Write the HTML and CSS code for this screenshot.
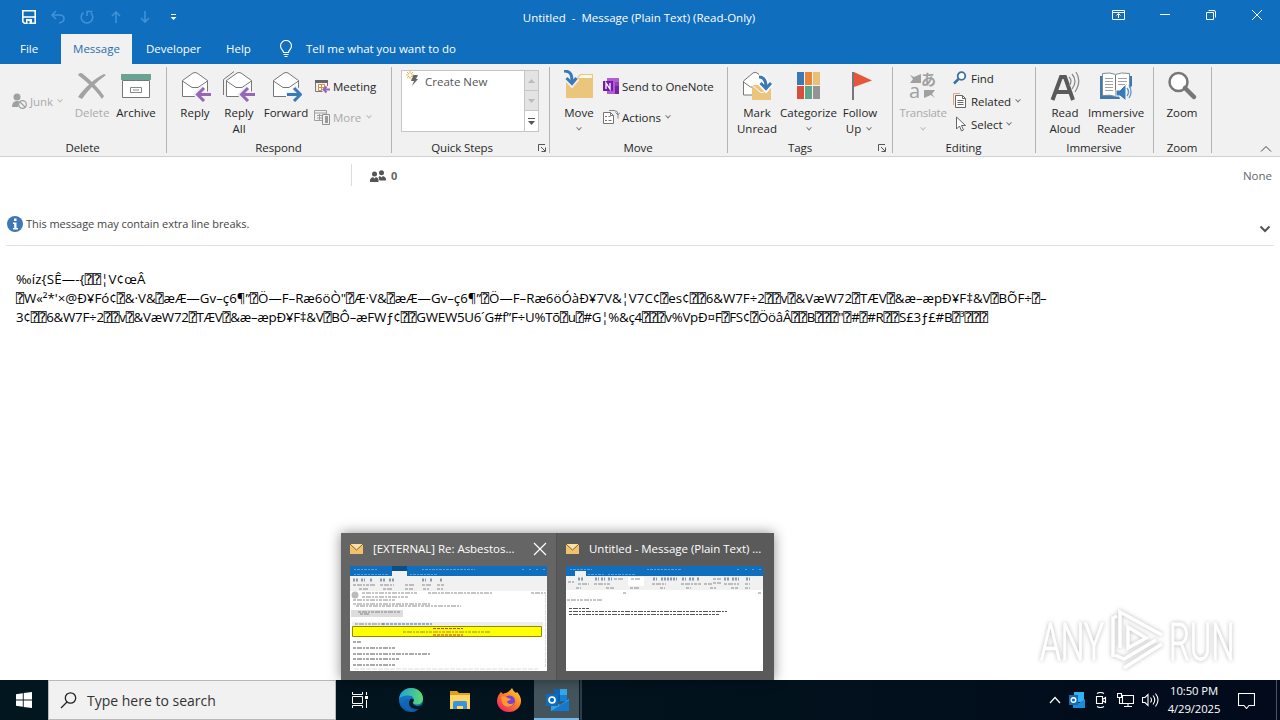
FILE: index.html
```html
<!DOCTYPE html>
<html lang="en">
<head>
    <meta charset="UTF-8">
    <meta name="viewport" content="width=device-width, initial-scale=1.0">
    <title>Untitled - Message (Plain Text)</title>
    <link rel="stylesheet" href="styles.css">
</head>
<body>
    <!-- Title bar -->
    <header class="titlebar">
        <div class="quick-access">
            <svg width="16" height="16" viewBox="0 0 16 16"><path d="M1.8 1.8h12.4v12.4H3.4L1.8 12.6z" fill="none" stroke="#fff" stroke-width="1.6"/><path d="M2 8h12" stroke="#fff" stroke-width="1.6"/><path d="M5 14v-4h6v4" fill="#fff"/><path d="M6.500 12h2v2.500h-2z" fill="#106ebe"/></svg>
            <svg class="dim" width="16" height="16" viewBox="0 0 16 16"><path d="M6 2L2 6l4 4M2.500 6H9.500c3 0 4.500 1.500 4.500 3.800S12 13.500 9 14"/></svg>
            <svg class="dim" width="16" height="16" viewBox="0 0 16 16"><path d="M4.500 3.500A5.800 5.800 0 1 0 11.800 3.800M8 7V2.500h5.500"/></svg>
            <svg class="dim" width="16" height="16" viewBox="0 0 16 16"><path d="M8 14V3M4 7l4-4 4 4"/></svg>
            <svg class="dim" width="16" height="16" viewBox="0 0 16 16"><path d="M8 2v11M4 9l4 4 4-4"/></svg>
            <svg width="16" height="16" viewBox="0 0 16 16"><path d="M5 5.500h5" stroke="#fff"/><path d="M4.500 8h6l-3 3z" fill="#fff"/></svg>
        </div>
        <div class="window-title">Untitled&nbsp; - &nbsp;Message (Plain Text) (Read-Only)</div>
        <div class="window-buttons">
            <svg width="46" height="30" viewBox="0 0 46 30"><path d="M16.500 10.500h12v9h-12zM16.500 12.500h12M22.500 18v-4M20.500 15.500l2-2 2 2"/></svg>
            <svg width="46" height="30" viewBox="0 0 46 30"><path d="M18 14.500h10"/></svg>
            <svg width="46" height="30" viewBox="0 0 46 30"><path d="M18.500 12.500h7v7h-7zM20.500 10.500h5.500q1.500 0 1.500 1.500v5.500"/></svg>
            <svg width="46" height="30" viewBox="0 0 46 30"><path d="M18 10l10 10M28 10l-10 10"/></svg>
        </div>
    </header>

    <!-- Tabs -->
    <nav class="tabs">
        <a class="tab tab-file">File</a>
        <a class="tab tab-active">Message</a>
        <a class="tab tab-developer">Developer</a>
        <a class="tab tab-help">Help</a>
        <svg class="bulb" width="14" height="18" viewBox="0 0 14 18"><path d="M4.500 12.500c0-2.500-3-3-3-6.500a5.500 5.500 0 0 1 11 0c0 3.500-3 4-3 6.500zM4.500 14.500h5M5.500 16.500h3" fill="none" stroke="#fff" stroke-width="1.200"/></svg>
        <a class="tab tell-me">Tell me what you want to do</a>
    </nav>

    <!-- Ribbon -->
    <div class="ribbon">
        <section class="group group-delete">
            <div class="group-body">
                <div class="small-col">
                    <div class="small disabled junk">
                        <svg width="17" height="17" viewBox="0 0 17 17"><circle cx="6" cy="4" r="3.500" fill="#a0a0a0"/><path d="M1 14c0-4 2-6 5-6 1 0 2 .3 2.500.7L7 14z" fill="#a0a0a0"/><circle cx="11.500" cy="11.500" r="3.800" fill="#f1f1f1" stroke="#a0a0a0" stroke-width="1.300"/><path d="M9 9l5 5" stroke="#a0a0a0" stroke-width="1.300"/></svg>
                        <span>Junk</span><i class="chev"></i>
                    </div>
                </div>
                <div class="big disabled">
                    <svg width="32" height="32" viewBox="0 0 32 32"><path d="M2 5c1-2 3-3 5-1 9 7 16 15 21 22l-2 3C20 20 11 12 2 5z" fill="#a3a3a3"/><path d="M28 4l2 1C20 12 12 20 6 29l-4-2C9 17 18 9 28 4z" fill="#a3a3a3"/></svg>
                    <span>Delete</span>
                </div>
                <div class="big">
                    <svg width="32" height="32" viewBox="0 0 32 32"><path d="M1 4h30v6H1z" fill="#6aa391"/><path d="M2.500 10.500h27v17h-27z" fill="#fff" stroke="#777"/><path d="M10.500 17.500h11v5h-11z" fill="#fff" stroke="#888"/><path d="M13 20h6" stroke="#888"/></svg>
                    <span>Archive</span>
                </div>
            </div>
            <div class="group-label">Delete</div>
        </section>

        <section class="group group-respond">
            <div class="group-body">
                <div class="big">
                    <svg width="32" height="32" viewBox="0 0 32 32"><path d="M3.500 26.500v-16L14 3q2-1 4 0l10.500 7.500v16z" fill="#fff" stroke="#777"/><path d="M3.500 11L13 17.500h6L28.500 11" fill="none" stroke="#777"/><path d="M32 24.500H19M25 17.500l-7 7 7 7" fill="none" stroke="#f1f1f1" stroke-width="6"/><path d="M32 24.500H19M25 18l-6.500 6.500L25 31" fill="none" stroke="#9467b8" stroke-width="3"/></svg>
                    <span>Reply</span>
                </div>
                <div class="big">
                    <svg width="32" height="32" viewBox="0 0 32 32"><path d="M.5 25V9.500L11 1.500" fill="none" stroke="#777"/><path d="M3.500 26.500v-16L14 3q2-1 4 0l10.500 7.500v16z" fill="#fff" stroke="#777"/><path d="M3.500 11L13 17.500h6L28.500 11" fill="none" stroke="#777"/><path d="M32 24.500H19M25 17.500l-7 7 7 7" fill="none" stroke="#f1f1f1" stroke-width="6"/><path d="M32 24.500H19M25 18l-6.500 6.500L25 31" fill="none" stroke="#9467b8" stroke-width="3"/></svg>
                    <span>Reply<br>All</span>
                </div>
                <div class="big forward">
                    <svg width="32" height="32" viewBox="0 0 32 32"><path d="M3.500 26.500v-16L14 3q2-1 4 0l10.500 7.500v16z" fill="#fff" stroke="#777"/><path d="M3.500 11L13 17.500h6L28.500 11" fill="none" stroke="#777"/><path d="M16 24.500h14M24 17.500l7 7-7 7" fill="none" stroke="#f1f1f1" stroke-width="6"/><path d="M17 24.500h13M24 18l6.500 6.500L24 31" fill="none" stroke="#3a7ab8" stroke-width="3"/></svg>
                    <span>Forward</span>
                </div>
                <div class="small-col two-rows">
                    <div class="small">
                        <svg width="16" height="16" viewBox="0 0 16 16"><path d="M1 2h13v3H1z" fill="#666"/><path d="M1.500 5v8.500h7M13.500 5v3" fill="none" stroke="#777"/><path d="M4.500 6.500h3v3h-3zM7.500 6.500h3v3h-3zM4.500 9.500h3v3h-3z" fill="#fff" stroke="#d98a4c"/><path d="M16 11.500H9.500M12.500 8.500l-3 3 3 3" fill="none" stroke="#9467b8" stroke-width="2"/></svg>
                        <span>Meeting</span>
                    </div>
                    <div class="small disabled">
                        <svg width="16" height="16" viewBox="0 0 16 16"><path d="M.5 1.500h12v10H.5zM.5 4h12M3 6.500h6M3 9h6M5.500 5v6" fill="none" stroke="#a0a0a0"/><path d="M8.500 5.500h7v10h-7z" fill="#f1f1f1" stroke="#909090"/><path d="M11 7h3v7h-3z" fill="#999"/></svg>
                        <span>More</span><i class="chev"></i>
                    </div>
                </div>
            </div>
            <div class="group-label">Respond</div>
        </section>

        <section class="group group-steps">
            <div class="group-body">
                <div class="gallery">
                    <div class="gallery-item">
                        <svg width="14" height="16" viewBox="0 0 14 16"><path d="M7 4h5l-2 4h2l-6 7 2-5H5z" fill="#666"/><path d="M4 0v8M0 4h8M1 1l6 6M7 1L1 7" stroke="#e2b25c"/><circle cx="4" cy="4" r="1.500" fill="#fff"/></svg>
                        <span>Create New</span>
                    </div>
                    <div class="gallery-scroll">
                        <b class="off"><svg width="7" height="4"><path d="M0 4l3.500-4L7 4z" fill="#bbb"/></svg></b>
                        <b class="off"><svg width="7" height="4"><path d="M0 0l3.500 4L7 0z" fill="#bbb"/></svg></b>
                        <b><svg width="7" height="7"><path d="M0 .5h7" stroke="#555"/><path d="M0 3l3.500 4L7 3z" fill="#555"/></svg></b>
                    </div>
                </div>
            </div>
            <div class="group-label has-launcher"><span>Quick Steps</span>
                <svg width="8" height="8" viewBox="0 0 8 8"><path d="M.5 7V.5H7M3 3l4 4M7.500 3.500v4h-4" fill="none" stroke="#555"/></svg>
            </div>
        </section>

        <section class="group group-move">
            <div class="group-body">
                <div class="big">
                    <svg width="32" height="32" viewBox="0 0 32 32"><path d="M3 28V9h10l4-5h13v24z" fill="#ebc57b"/><path d="M15 8l3-3h11v3z" fill="#fff8ec"/><path d="M1 1c7 0 8 4 8 11M3.500 8L9 14l5-6" fill="none" stroke="#f1f1f1" stroke-width="6"/><path d="M1 1c7 0 8 4 8 11M3.500 8L9 13.500 13.500 8" fill="none" stroke="#3a7ab8" stroke-width="3"/></svg>
                    <span>Move</span><i class="chev"></i>
                </div>
                <div class="small-col two-rows">
                    <div class="small">
                        <svg width="17" height="16" viewBox="0 0 17 16"><path d="M4 0h12v16H4z" fill="#b05fd0"/><path d="M12 4h4v4h-4z" fill="#9440bd"/><path d="M12 8h4v8h-4z" fill="#7227a0"/><path d="M0 3h10v10H0z" fill="#7719aa"/><path d="M3 11V5l4 6V5" fill="none" stroke="#fff" stroke-width="1.300"/></svg>
                        <span>Send to OneNote</span>
                    </div>
                    <div class="small">
                        <svg width="17" height="16" viewBox="0 0 17 16"><path d="M.5 3.500h7l3 3v8H.5z" fill="#fff" stroke="#777"/><path d="M7.500 3.500v3h3M2 7.500h2M5.500 7.500h2M2 11.500h2M5.500 11.500h3" fill="none" stroke="#777"/><path d="M6 1.500h5q4 0 4 4v4M12.500 3.500L15 6l2-2.500" fill="none" stroke="#888"/></svg>
                        <span>Actions</span><i class="chev"></i>
                    </div>
                </div>
            </div>
            <div class="group-label">Move</div>
        </section>

        <section class="group group-tags">
            <div class="group-body">
                <div class="big">
                    <svg width="32" height="32" viewBox="0 0 32 32"><path d="M2.500 25V11L12 3q2-1.500 4 0l8 6v16z" fill="#fff" stroke="#777"/><path d="M2.500 12l7 5h6" fill="none" stroke="#777"/><path d="M11 15h19v15H11z" fill="#ebc57b"/><path d="M11 15l8 7q2 1.500 4 0l7-6" fill="none" stroke="#fff"/><path d="M18 7c6 0 7 5 7 11M19.500 13l5.500 6 5-6" fill="none" stroke="#fff" stroke-width="6"/><path d="M18 7c6 0 7 5 7 10M19.500 13l5.500 5.500 5-5.500" fill="none" stroke="#3a7ab8" stroke-width="3"/></svg>
                    <span>Mark<br>Unread</span>
                </div>
                <div class="big categorize">
                    <svg width="32" height="32" viewBox="0 0 32 32"><path d="M4 2h7v13H4z" fill="#3c78b8"/><path d="M12 2h7v13h-7z" fill="#e8843c"/><path d="M20 2h7v13h-7z" fill="#e8c078"/><path d="M4 16h7v13H4z" fill="#d8503c"/><path d="M12 16h7v13h-7z" fill="#5fa58b"/><path d="M20 16h7v13h-7z" fill="#949494"/></svg>
                    <span>Categorize</span><i class="chev"></i>
                </div>
                <div class="big">
                    <svg width="32" height="32" viewBox="0 0 32 32"><path d="M9 2v28" stroke="#777" stroke-width="2"/><path d="M10 2l18 8.500L10 17z" fill="#e8553c"/></svg>
                    <span>Follow<br>Up <i class="chev"></i></span>
                </div>
            </div>
            <div class="group-label has-launcher"><span>Tags</span>
                <svg width="8" height="8" viewBox="0 0 8 8"><path d="M.5 7V.5H7M3 3l4 4M7.500 3.500v4h-4" fill="none" stroke="#555"/></svg>
            </div>
        </section>

        <section class="group group-editing">
            <div class="group-body">
                <div class="big disabled translate">
                    <svg width="32" height="32" viewBox="0 0 32 32"><path d="M3 5l4 2 7-3v9H3l3-4z" fill="#a0a0a0"/><path d="M28 28l-4-3-7 3v-8h11l-3 4z" fill="#a0a0a0"/><text x="14" y="15" class="glyph-ja">あ</text><text x="2" y="28" class="glyph-a">a</text></svg>
                    <span>Translate</span><i class="chev"></i>
                </div>
                <div class="small-col three-rows">
                    <div class="small">
                        <svg width="16" height="16" viewBox="0 0 16 16"><circle cx="8.500" cy="6" r="3.800" fill="#fff" stroke="#3a6fa8" stroke-width="1.800"/><path d="M5.500 9L1 13.500" stroke="#3a6fa8" stroke-width="2.500"/></svg>
                        <span>Find</span>
                    </div>
                    <div class="small">
                        <svg width="16" height="16" viewBox="0 0 16 16"><path d="M.5 12V.5H7" fill="none" stroke="#e2a470"/><path d="M2.500 2.500h7l3 3v9h-10z" fill="#fff" stroke="#666"/><path d="M9.500 2.500v3h3M4.500 7.500h6M4.500 9.500h6M4.500 11.500h6" fill="none" stroke="#666"/></svg>
                        <span>Related</span><i class="chev"></i>
                    </div>
                    <div class="small">
                        <svg width="16" height="16" viewBox="0 0 16 16"><path d="M3.500 1v12l3-3 2 5 2-1-2-4.500h4z" fill="#fff" stroke="#666"/></svg>
                        <span>Select</span><i class="chev"></i>
                    </div>
                </div>
            </div>
            <div class="group-label">Editing</div>
        </section>

        <section class="group group-immersive">
            <div class="group-body">
                <div class="big">
                    <svg width="32" height="32" viewBox="0 0 32 32"><path d="M3.500 30L12 7h4l8 23M6.500 22h14" fill="none" stroke="#5a5a5a" stroke-width="4"/><path d="M20 7q4 4 0 9M23 4q6 7 0 15M27 2q6 9-1 20" fill="none" stroke="#888" stroke-width="1.200"/></svg>
                    <span>Read<br>Aloud</span>
                </div>
                <div class="big reader">
                    <svg width="32" height="32" viewBox="0 0 32 32"><path d="M0 6h32v23H0z" fill="#3f78b0"/><path d="M2.500 3.500q8-1.500 13 1 5-2.500 14-1v22q-8-1-14 1-5-2-13-1z" fill="#fff" stroke="#7e8a96"/><path d="M15.500 5v21" stroke="#777"/><path d="M5 8.500h8M5 11.500h8M5 14.500h8M5 17.500h8M5 20.500h8M18 8.500h9M18 11.500h9M18 14.500h9" stroke="#a0a0a0"/><path d="M20 29l-1-3 13-10v15z" fill="#f1f1f1"/><path d="M16 20h4l6-6v17l-6-5h-4z" fill="#3a7ab8" stroke="#fff"/><path d="M27 18q3 4 0 8M29 15q4 7 0 13" fill="none" stroke="#5b93c8" stroke-width="1.300"/></svg>
                    <span>Immersive<br>Reader</span>
                </div>
            </div>
            <div class="group-label">Immersive</div>
        </section>

        <section class="group group-zoom">
            <div class="group-body">
                <div class="big">
                    <svg width="32" height="32" viewBox="0 0 32 32"><circle cx="12.500" cy="12" r="9" fill="#fff" stroke="#777" stroke-width="2.500"/><path d="M19 18l9 9" stroke="#777" stroke-width="4.500" stroke-linecap="round"/></svg>
                    <span>Zoom</span>
                </div>
            </div>
            <div class="group-label">Zoom</div>
        </section>
        <svg class="collapse" width="12" height="8" viewBox="0 0 12 8"><path d="M1 6.500l5-5 5 5" fill="none" stroke="#444"/></svg>
    </div>

    <!-- Message -->
    <main class="message">
        <div class="header-row">
            <div class="people">
                <svg width="16" height="13" viewBox="0 0 16 13"><circle cx="4.500" cy="4" r="2.500"/><circle cx="11.500" cy="2.800" r="2.500"/><path d="M0 12V9.500Q1 7.500 3 7l1.500 1.500L6 7q2 .5 2.500 2.500V12zM8.500 7.500Q9 6 10 6l1.500 1.500L13 6q2 .5 3 2.500V10.500H9.500z"/></svg>
                <b>0</b>
            </div>
            <span class="none">None</span>
        </div>
        <div class="info-row">
            <svg width="16" height="16" viewBox="0 0 16 16"><circle cx="8" cy="8" r="8" fill="#3d77b5"/><path d="M7 2.500h2.500V5H7zM6 6.500h3.500V12H11v1.500H6V12h1.200V8H6z" fill="#fff"/></svg>
            <span>This message may contain extra line breaks.</span>
            <svg class="expand" width="12" height="8" viewBox="0 0 12 8"><path d="M1.500 1.500L6 6l4.500-4.500" fill="none" stroke="#555" stroke-width="2"/></svg>
        </div>
        <div class="mail-text">
            <p class="line-1">‰íz{SÊ—-{⍰⍰¦V¢œÂ</p>
            <p class="line-2">⍰W«²*'×@Ð¥Fó¢⍰&amp;·V&amp;⍰æÆ—Gv–ç6¶”⍰Ö—F–Ræ6öÒ"⍰Æ·V&amp;⍰æÆ—Gv–ç6¶”⍰Ö—F–Ræ6öÓàÐ¥7V&amp;¦V7C¢⍰es¢⍰⍰6&amp;W7F÷2⍰⍰v⍰&amp;VæW72⍰TÆV⍰&amp;æ–æpÐ¥F‡&amp;V⍰BÕF÷⍰–</p>
            <p class="line-3">3¢⍰⍰6&amp;W7F÷2⍰⍰v⍰&amp;VæW72⍰TÆV⍰&amp;æ–æpÐ¥F‡&amp;V⍰BÔ–æFWƒ¢⍰⍰GWEW5U6´G#f”F÷U%Tõ⍰u⍰#G¦%&amp;ç4⍰⍰⍰v%VpÐ¤F⍰FS¢⍰ÖöâÂ⍰⍰B⍰⍰⍰"⍰#⍰#R⍰⍰S£3ƒ£#B⍰³⍰⍰⍰</p>
        </div>
    </main>

    <!-- Watermark -->
    <div class="watermark">
        <svg width="210" height="80" viewBox="0 0 210 80">
            <text transform="translate(10 60) scale(.64 1)">ANY</text>
            <text transform="translate(139 60) scale(.63 1)">RUN</text>
            <path d="M83 57V18l4-2M90 48V12l42 23M126 40L94 59l-9-4M132 44L94 68M98 27v21l18-10z"/>
        </svg>
    </div>

    <!-- Window previews -->
    <div class="previews">
        <div class="preview hovered">
            <div class="preview-title">
                <svg width="13" height="10" viewBox="0 0 13 10"><path d="M0 0h13v10H0z" fill="#f0c26e"/><path d="M0 0l6.500 6L13 0" fill="#fbe0a8" stroke="#8a6420"/></svg>
                <span>[EXTERNAL] Re: Asbestos...</span>
                <svg class="close" width="14" height="14" viewBox="0 0 14 14"><path d="M1 1l12 12M13 1L1 13" stroke="#fff" stroke-width="1.200"/></svg>
            </div>
            <svg class="thumb" width="197" height="105" viewBox="0 0 197 105">
                <path d="M0 0h197v10H0z" fill="#106ebe"/><path d="M42 0h15v5H42z" fill="#0b4f8a"/><path d="M42 5h15v5H42z" fill="#f1f1f1"/><path d="M0 10h197v15H0z" fill="#f1f1f1"/>
                <path class="faint-light" d="M4 3.500h24M72 3.500h53M4 8.500h35M60 8.500h28M172 3.500h3M179 3.500h3M186 3.500h3M193 3.500h2"/>
                <path class="ink-blue" d="M3 14h6M11 14h4M20 14h3M30 14h5M39 14h5M72 14h4M80 14h3M90 14h3" stroke-width="3"/>
                <path class="ink" d="M3 19h23M30 19h14M55 19h10M72 19h10M87 19h7M9 23h10M33 23h10M55 23h8M73 23h6M87 23h6" opacity=".6"/>
                <circle cx="5" cy="29" r="3.500" fill="#bbb"/>
                <path class="ink" d="M12 27h56M78 27h64M181 27h15M12 31h46M3 34h42M3 38h78M6 40h105" opacity=".7"/>
                <path d="M1 44h52v7H1z" fill="#ddd"/><path class="ink" d="M8 46h42M10 48h10"/>
                <path d="M2 56h191v5H2z" fill="#eee"/><path class="ink" d="M5 58h30"/><path d="M32 58h50" stroke="#4267c8" stroke-dasharray="3 1"/>
                <path d="M2.500 60.500h189v10h-189z" fill="#ff0" stroke="#8c8c00"/><path d="M83 62.500h30M83 69h30" stroke="#e63232" stroke-dasharray="3 1"/><path class="ink" d="M53 66h88"/>
                <path class="ink dark" d="M3 76h8M3 82h42M3 88h78M3 93h46M3 99h43"/>
                <path d="M4 103h184M195.500 26v75" stroke="#ddd" stroke-dasharray="5 1"/>
            </svg>
        </div>
        <div class="preview">
            <div class="preview-title">
                <svg width="13" height="10" viewBox="0 0 13 10"><path d="M0 0h13v10H0z" fill="#f0c26e"/><path d="M0 0l6.500 6L13 0" fill="#fbe0a8" stroke="#8a6420"/></svg>
                <span>Untitled - Message (Plain Text) ...</span>
            </div>
            <svg class="thumb" width="197" height="105" viewBox="0 0 197 105">
                <path d="M0 0h197v10H0z" fill="#106ebe"/><path d="M9 5h11v5H9z" fill="#f1f1f1"/><path d="M0 10h197v14H0z" fill="#f1f1f1"/>
                <path class="faint-light" d="M4 3.500h22M81 3.500h35M22 8.500h16M42 8.500h28M171 3.500h3M179 3.500h3M186 3.500h3M193 3.500h2"/>
                <path d="M62 11h16v9H62z" fill="#fff"/>
                <path class="ink-blue" d="M12 13h5M29 13h4M35 13h4M42 13h4M87 13h4M95 13h16M116 13h4M123 13h5M131 13h3M158 13h5M166 13h7M180 13h4" stroke-width="3"/>
                <path class="ink" d="M2 16h6M12 18h11M28 18h16M48 13h10M65 13h10M86 18h14M115 18h20M138 18h8M147 13h8M147 17h8M158 18h15M179 18h5M10 22h5M40 22h8M64 22h9M94 22h5M120 22h5M144 22h6M165 22h7M179 22h5" opacity=".7"/>
                <path class="ink" d="M57 27h4M192 27h4M1 34h36" opacity=".85"/>
                <path class="ink dark" d="M3 42.500h20M3 45.500h158M3 48.500h150"/>
            </svg>
        </div>
    </div>

    <!-- Taskbar -->
    <footer class="taskbar">
        <div class="start"><svg width="16" height="16" viewBox="0 0 16 16"><path d="M0 2.200L6.800 1.200v6.300H0zM7.700 1.100L16 0v7.500H7.700zM0 8.400h6.800v6.400L0 13.800zM7.700 8.400H16V16l-8.300-1.100z" fill="#fff"/></svg></div>
        <div class="search">
            <svg width="17" height="17" viewBox="0 0 17 17"><circle cx="10.500" cy="6" r="5.200" fill="none" stroke="#222" stroke-width="1.300"/><path d="M7 10l-6 6" stroke="#222" stroke-width="1.300"/></svg>
            <span>Type here to search</span>
        </div>
        <div class="app task-view"><svg width="16" height="16" viewBox="0 0 16 16"><path d="M.5 0v2.500h10V0M.5 16v-2.500h10V16M.5 4.500h10v7H.5zM14.500 0v3M14.500 8v8" fill="none" stroke="#fff"/><path d="M13 4h3v3h-3z" fill="#fff"/></svg></div>
        <div class="app">
            <svg width="24" height="24" viewBox="0 0 24 24">
                <defs>
                    <linearGradient id="edgeTop" x1="0" x2="1"><stop offset="0" stop-color="#1fa3dd"/><stop offset="1" stop-color="#5ddc6c"/></linearGradient>
                    <linearGradient id="edgeBase" x2="0" y2="1"><stop offset="0" stop-color="#1b86d6"/><stop offset="1" stop-color="#0b55a8"/></linearGradient>
                </defs>
                <circle cx="12" cy="12" r="12" fill="url(#edgeBase)"/>
                <path d="M0 11C1 4 6 0 12 0c7 0 12 5 12 10.500 0 4-3 6-6 6-3 0-4.500-1.300-3.800-2.500C16 11 14 7.500 9.500 7.500 5 7.500 1 9 0 11z" fill="url(#edgeTop)"/>
                <path d="M14 14c-1 2 1.500 4 5 4 1.500 0 3-.5 4-1.300L21 21c-5 1-11-1-11-6 0-3 2-5 4-4 1 1 1 2 0 3z" fill="#021820"/>
                <path d="M10 11c-5 4-1 11 6 12.300C7 25 2 17 7 11z" fill="#1263b4"/>
            </svg>
        </div>
        <div class="app"><svg width="22" height="20" viewBox="0 0 22 20"><path d="M1 1h7l2 2h11v5H1z" fill="#e3a21a"/><path d="M1 5h20v14H1z" fill="#ffd767"/><path d="M4 19v-6q0-2 2-2h10q2 0 2 2v6h-4v-3H8v3z" fill="#3a94d8"/></svg></div>
        <div class="app">
            <svg width="24" height="24" viewBox="0 0 24 24">
                <defs><linearGradient id="fox" x1="1" x2="0.200" y2="1"><stop offset="0" stop-color="#ffe14a"/><stop offset=".45" stop-color="#ff8a1e"/><stop offset="1" stop-color="#f0206a"/></linearGradient></defs>
                <path d="M4 4l2 2q1-1 3-1 3-1 6-5 1 3 4 5l1-1q4 4 4 9c0 6-5 11-12 11S0 19 0 13c0-4 2-7 4-9z" fill="url(#fox)"/>
                <circle cx="12.500" cy="13" r="5.500" fill="#7542d8"/><path d="M4 9c3-1 5 0 7 1l3 1c-1 2-3 1-4 3 1 2 4 3 7 1-2 5-11 5-12-1z" fill="#ff9a2e"/>
            </svg>
        </div>
        <div class="app app-active">
            <svg width="24" height="24" viewBox="0 0 24 24"><path d="M8 1h13v13H8z" fill="#1066b5"/><path d="M14 1h7v6h-7z" fill="#32a9e7"/><path d="M8 7h6v6H8z" fill="#0a5ca8"/><path d="M14 7h7v6h-7z" fill="#167fd0"/><path d="M5 11l9 6 9-6v12H5z" fill="#2fa4e8"/><path d="M5 23l18-11v11z" fill="#1479cc"/><path d="M0 6h12v12H0z" fill="#0f6cbd"/><circle cx="6" cy="12" r="3" fill="none" stroke="#fff" stroke-width="1.700"/></svg>
        </div>
        <div class="stack-edge"></div>
        <div class="tray">
            <svg width="12" height="8" viewBox="0 0 12 8"><path d="M1 7l5-5.500L11 7" fill="none" stroke="#fff" stroke-width="1.200"/></svg>
            <svg width="16" height="16" viewBox="0 0 16 16"><path d="M5 0h10v10H5z" fill="#36b0ee"/><path d="M4 7l6 4 6-4v9H4z" fill="#1b8ad8"/><path d="M0 3h9v10H0z" fill="#0f6cbd"/><circle cx="4.500" cy="8" r="2.300" fill="none" stroke="#fff" stroke-width="1.400"/></svg>
            <svg width="16" height="16" viewBox="0 0 16 16" class="line"><path d="M3.500 4.500h6v7h-6zM9.500 7.500l3-2v5l-3-2M4 1.500q3.500-2 7 0M4 14.500q3.500 2 7 0"/></svg>
            <svg width="17" height="16" viewBox="0 0 17 16" class="line"><path d="M5.500 3.500h11v8h-11zM11 11.500v3M7 14.500h8M.5 1.500h4v4h-4zM2.500 5.500v6h3"/></svg>
            <svg width="17" height="16" viewBox="0 0 17 16" class="line"><path d="M.5 5.500H3l3-3v11l-3-3H.5zM8.500 5.500q2 2.500 0 5M11 3.500q3.500 4.500 0 9M13.500 1.500q5 6.500 0 13"/></svg>
            <div class="clock">10:50 PM<br>4/29/2025</div>
            <svg class="line notify" width="17" height="16" viewBox="0 0 17 16"><path d="M.5.500h16v12H11l-2.500 3-2.500-3H.5z"/></svg>
        </div>
    </footer>
</body>
</html>
```
FILE: styles.css
```css
* {
    box-sizing: border-box;
}
body {
    margin: 0;
    width: 1280px;
    height: 720px;
    position: relative;
    overflow: hidden;
    display: flex;
    flex-direction: column;
    background: #fff;
    font-family: "Open Sans", "Noto Sans", sans-serif;
    font-size: 11.5px;
    color: #262626;
}
svg {
    display: block;
    flex: none;
}
p {
    margin: 0;
}

/* Title bar */
.titlebar {
    height: 34px;
    background: #106ebe;
    color: #fff;
    display: grid;
    grid-template-columns: 426px 1fr 428px;
}
.quick-access {
    display: flex;
    gap: 13px;
    padding: 9px 0 0 21px;
}
.dim {
    fill: none;
    stroke: #3f92d8;
    stroke-width: 1.6;
}
.window-title {
    text-align: center;
    line-height: 36px;
    white-space: nowrap;
}
.window-buttons {
    display: flex;
    justify-content: flex-end;
    fill: none;
    stroke: #fff;
}

/* Tabs */
.tabs {
    height: 30px;
    background: #106ebe;
    color: #fff;
    display: flex;
    font-size: 11.5px;
    line-height: 29px;
}
.tab {
    white-space: nowrap;
}
.tab-file {
    width: 61px;
    padding-left: 20px;
}
.tab-active {
    width: 71px;
    background: #f1f1f1;
    color: #2a6cab;
    text-align: center;
}
.tab-developer {
    width: 94px;
    padding-left: 14px;
}
.tab-help {
    width: 54px;
}
.bulb {
    margin: 6px 12px 0 -1px;
}
.tell-me {
    padding-left: 1px;
    letter-spacing: -.05px;
}

/* Ribbon */
.ribbon {
    height: 93px;
    background: #f1f1f1;
    border-bottom: 1px solid #d0d0d0;
    display: flex;
}
.group {
    display: flex;
    flex-direction: column;
    padding-top: 6px;
    border-right: 1px solid #b4b4b4;
    border-image: linear-gradient(transparent 4px, #b4b4b4 4px, #b4b4b4 88px, transparent 88px) 1;
}
.group-delete { width: 167px; }
.group-respond { width: 225px; }
.group-steps { width: 158px; }
.group-move { width: 178px; }
.group-tags { width: 165px; }
.group-editing { width: 143px; }
.group-immersive { width: 118px; }
.group-zoom { width: 58px; }
.group-body {
    display: flex;
    flex: none;
    height: 69px;
    padding-left: 7px;
}
.group-delete .group-body { padding-left: 11px; }
.group-respond .group-body { padding-left: 6px; }
.group-steps .group-body { padding-left: 9px; }
.group-editing .group-body { padding-left: 6px; }
.group-zoom .group-body { padding-left: 6px; }
.group-label {
    flex: none;
    height: 17px;
    text-align: center;
    line-height: 18px;
    padding-right: 1px;
    letter-spacing: -.1px;
}
.has-launcher {
    display: flex;
    align-items: center;
}
.has-launcher span {
    flex: 1;
    padding-right: 6px;
}
.has-launcher svg {
    margin-right: 2px;
}
.group-tags .group-label {
    padding-right: 4px;
}
.big {
    width: 44px;
    display: flex;
    flex-direction: column;
    align-items: center;
    text-align: center;
    line-height: 16px;
    white-space: nowrap;
}
.big span {
    margin-top: 3px;
}
.big > .chev {
    margin-top: 6px;
}
.forward { width: 50px; }
.categorize { width: 59px; }
.translate { width: 48px; }
.translate span {
    letter-spacing: -.3px;
}
.reader { width: 58px; }
.disabled {
    color: #aaa;
}
.small-col {
    display: flex;
    flex-direction: column;
    padding-left: 3px;
}
.group-delete .small-col {
    width: 59px;
    padding: 22px 0 0;
}
.two-rows {
    padding-top: 7px;
    gap: 13px;
}
.group-respond .small {
    gap: 3px;
}
.group-move .two-rows {
    padding-left: 2px;
}
.three-rows {
    padding-left: 6px;
    gap: 5px;
    margin-top: -1px;
}
.small {
    display: flex;
    align-items: center;
    height: 18px;
    gap: 2px;
    white-space: nowrap;
}
.small span {
    letter-spacing: -.05px;
}
.junk {
    gap: 2px;
}
.chev {
    display: inline-block;
    width: 4px;
    height: 4px;
    border: solid #777;
    border-width: 0 1px 1px 0;
    transform: rotate(45deg) translate(-1px, -1px);
    margin: 0 3px;
}
span .chev {
    margin-bottom: 2px;
}
.disabled .chev {
    border-color: #bbb;
}
.glyph-ja {
    font: 700 15px "Noto Sans CJK JP", sans-serif;
    fill: #a0a0a0;
}
.glyph-a {
    font: 20px "Open Sans", sans-serif;
    fill: #a0a0a0;
}
.translate svg {
    overflow: visible;
}
.gallery {
    width: 138px;
    height: 62px;
    background: #fff;
    border: 1px solid #c6c6c6;
    display: flex;
    justify-content: space-between;
}
.gallery-item {
    display: flex;
    gap: 5px;
    padding-left: 4px;
    line-height: 22px;
    color: #555;
}
.gallery-scroll {
    width: 14px;
    border-left: 1px solid #c6c6c6;
    display: grid;
    grid-template-rows: repeat(3, 1fr);
}
.gallery-scroll b {
    display: flex;
    align-items: center;
    justify-content: center;
}
.gallery-scroll .off {
    background: #e3e3e3;
    border-bottom: 1px solid #c6c6c6;
}
.collapse {
    margin: 81px 8px 0 auto;
}

/* Message */
.message {
    flex: 1;
}
.header-row {
    height: 55px;
    display: flex;
    justify-content: space-between;
    padding: 7px 8px 0 351px;
    line-height: 24px;
    color: #666;
}
.people {
    height: 22px;
    border-left: 1px solid #ddd;
    padding: 2px 0 0 18px;
    display: flex;
    align-items: center;
    gap: 5px;
    fill: #555;
    font-size: 11px;
}
.info-row {
    height: 34px;
    margin: 0 6px;
    border-bottom: 1px solid #e0e0e0;
    display: flex;
    gap: 3px;
    padding: 4px 3px 0 1px;
    font-size: 11px;
    letter-spacing: -.05px;
    line-height: 16px;
    color: #444;
}
.expand {
    margin: 9px 0 0 auto;
}
.mail-text {
    padding: 24px 0 0 16px;
    font: 13.3px/19px "Open Sans", "DejaVu Sans Mono", sans-serif;
    color: #000;
    white-space: nowrap;
}
.line-1 {
    letter-spacing: .15px;
}
.line-2 {
    letter-spacing: -.01px;
}
.line-3 {
    letter-spacing: -.24px;
}

.watermark {
    position: absolute;
    left: 1030px;
    top: 600px;
    filter: drop-shadow(0 0 2px rgba(0, 0, 0, .28));
}
.watermark text {
    font: 300 52px Roboto, sans-serif;
    fill: #fff;
    stroke: #fff;
}
.watermark path {
    fill: none;
    stroke: #fff;
    stroke-width: 3.5;
}

/* Window previews */
.previews {
    position: absolute;
    left: 341px;
    top: 533px;
    width: 433px;
    height: 147px;
    display: flex;
    box-shadow: 0 0 12px rgba(0, 0, 0, .45);
    color: #fff;
}
.preview {
    flex: 1;
    background: #5a5a5a;
    padding-left: 9px;
}
.hovered {
    flex: 0 0 216px;
    background: #656565;
    border-right: 1px solid #505050;
}
.preview-title {
    height: 33px;
    display: flex;
    align-items: center;
    gap: 10px;
    padding-bottom: 2px;
    font-size: 11.5px;
    letter-spacing: -.03px;
    white-space: nowrap;
}
.close {
    margin: 0 9px 0 auto;
}
.thumb {
    background: #fff;
}
.ink {
    stroke: #666;
    stroke-dasharray: 3 1 5 1 2 1;
    fill: none;
    opacity: .75;
}
.dark {
    stroke: #444;
    opacity: .9;
}
.ink-blue {
    stroke: #8a9cb0;
    stroke-dasharray: 2 1;
}
.faint-light {
    stroke: #a9d0f0;
    stroke-dasharray: 2 1 3 1;
    opacity: .5;
}

/* Taskbar */
.taskbar {
    height: 40px;
    background: linear-gradient(90deg, #02161f, #02121d 60%, #020a1c);
    display: flex;
    color: #fff;
}
.start {
    width: 48px;
    display: grid;
    place-items: center;
}
.search {
    width: 288px;
    background: #f1f1f1;
    border: 1px solid #b8b8b8;
    display: flex;
    align-items: center;
    gap: 10px;
    padding-left: 11px;
    font-size: 14px;
    color: #333;
}
.app {
    width: 49px;
    display: grid;
    place-items: center;
}
.task-view {
    width: 50px;
    padding-right: 3px;
}
.app-active {
    width: 45px;
    margin-left: 1px;
    background: #43545d;
    border-bottom: 2px solid #76b9ed;
    padding: 2px 0 0 3px;
}
.stack-edge {
    width: 3px;
    background: #2a3f49;
    border-left: 1px solid #0a1a22;
}
.tray {
    margin-left: auto;
    display: flex;
    align-items: center;
    gap: 8px;
    padding-right: 5px;
    border-right: 1px solid #4a5560;
    margin-right: 3px;
    font-size: 11.3px;
    letter-spacing: -.1px;
}
.line {
    fill: none;
    stroke: #fff;
    stroke-width: 1.1;
}
.clock {
    width: 54px;
    text-align: center;
    line-height: 18px;
    white-space: nowrap;
}
.notify {
    margin: 2px 16px 0 9px;
}
```
